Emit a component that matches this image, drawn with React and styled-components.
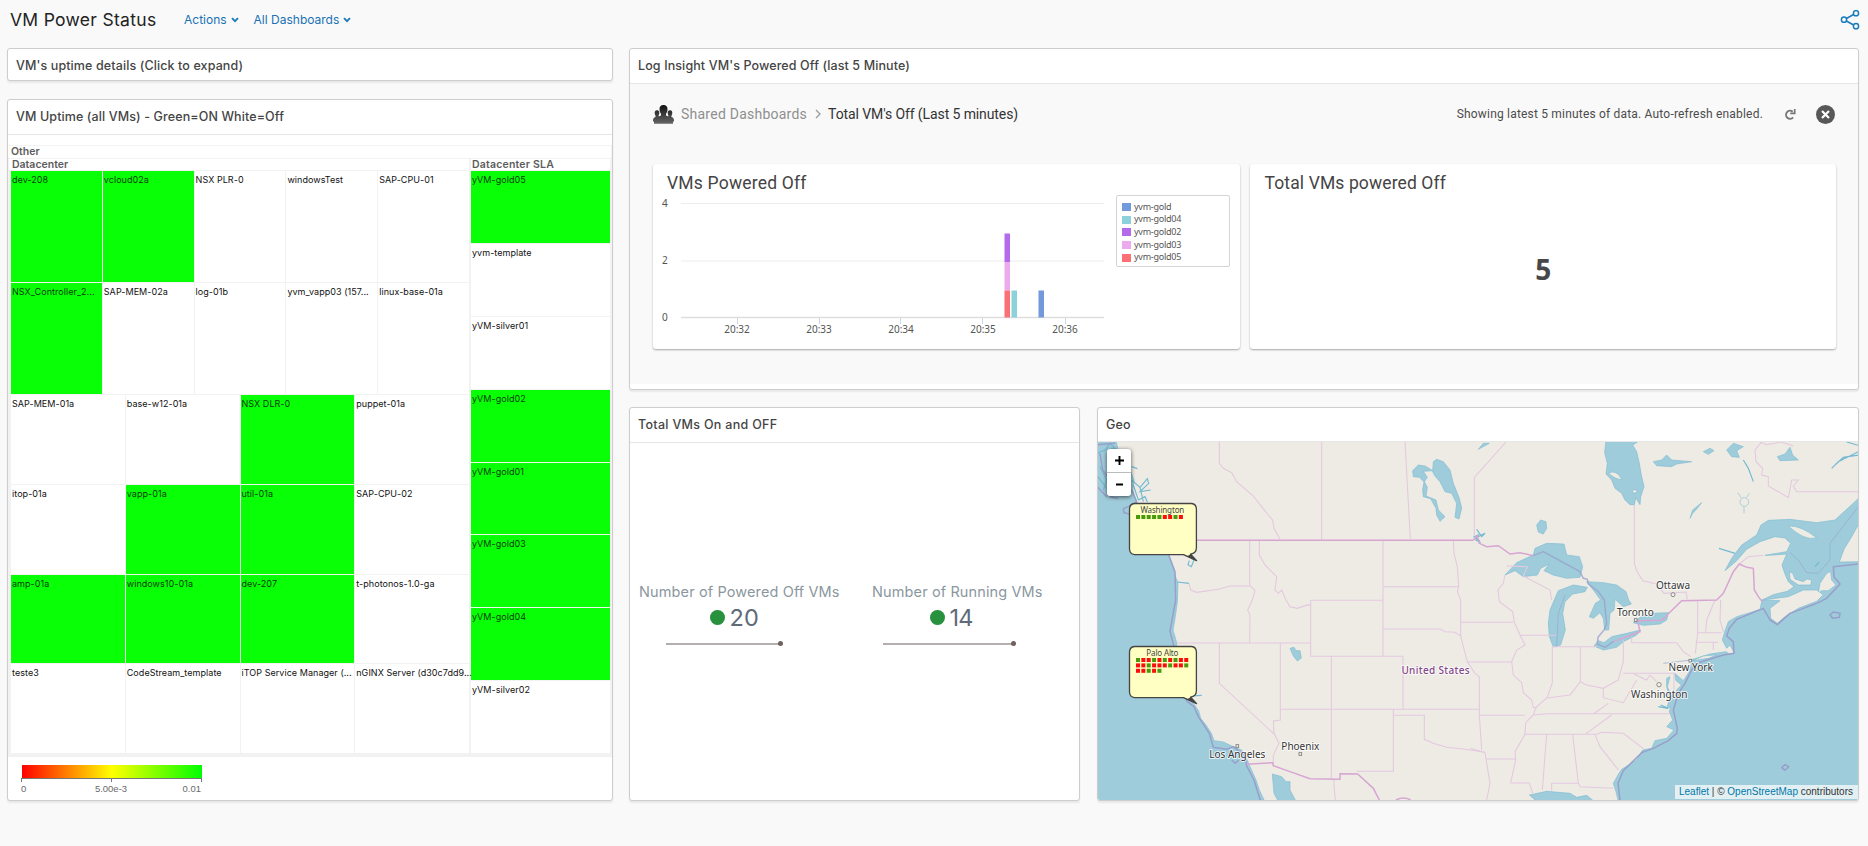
import React from "react";
import styled, { createGlobalStyle } from "styled-components";

const GlobalStyle = createGlobalStyle`
  * { box-sizing: border-box; }
  body {
    margin: 0;
    background: #f9f9f9;
    font-family: Inter, "Noto Sans", sans-serif;
    color: #313131;
    overflow: hidden;
  }
`;

/* ---------- page frame ---------- */

const Page = styled.div`
  width: 1868px;
  height: 846px;
  display: flex;
  flex-direction: column;
`;

const TopBar = styled.header`
  height: 48px;
  padding: 0 8px 9px 10px;
  display: flex;
  align-items: center;
  flex: none;
`;

const PageTitle = styled.h1`
  margin: 0;
  width: 174px;
  font-size: 17.5px;
  font-weight: 400;
  letter-spacing: 0.3px;
  color: #222;
  white-space: nowrap;
`;

const MenuLink = styled.a`
  display: flex;
  align-items: center;
  gap: 4px;
  margin-right: 15px;
  font-size: 12px;
  color: #1a72b5;
  white-space: nowrap;
`;

const ShareIcon = styled.svg`
  margin-left: auto;
  width: 20px;
  height: 20px;
  fill: none;
  stroke: #1b7bbb;
`;

const Board = styled.main`
  display: flex;
  gap: 16px;
  padding: 0 9px 0 7px;
`;

const Column = styled.div`
  display: flex;
  flex-direction: column;
  gap: ${(p) => p.$gap}px;
  width: ${(p) => p.$width}px;
  flex: none;
`;

const BottomRow = styled.div`
  display: flex;
  gap: 17px;
`;

const Panel = styled.section`
  width: ${(p) => (p.$width ? `${p.$width}px` : "100%")};
  height: ${(p) => p.$height}px;
  display: flex;
  flex-direction: column;
  background: #fff;
  border: 1px solid #cdcdcd;
  border-radius: 3px;
  box-shadow: 0 2px 2px rgba(0, 0, 0, 0.07);
  overflow: hidden;
  flex: none;
`;

const PanelTitle = styled.h2`
  margin: 0;
  height: ${(p) => p.$height || 34}px;
  padding: 0 8px ${(p) => p.$lift || 0}px;
  display: flex;
  align-items: center;
  flex: none;
  font-size: 12.5px;
  font-weight: 500;
  letter-spacing: ${(p) => p.$track || 0.11}px;
  color: #454545;
  border-bottom: ${(p) => (p.$plain ? "none" : "1px solid #e6e6e6")};
  white-space: nowrap;
`;

/* ---------- heat map ---------- */

const HeatArea = styled.div`
  margin-top: 10px;
  height: 612px;
  background: #f2f2f2;
  padding: 1px 1px 3px 0;
  display: flex;
  flex-direction: column;
  flex: none;
`;

const GroupLabel = styled.div`
  height: 12px;
  padding-left: 3px;
  background: #fff;
  font-size: 10.5px;
  line-height: 12px;
  font-weight: 600;
  letter-spacing: ${(p) => p.$track || 0}px;
  color: #5d5d5d;
  white-space: nowrap;
`;

const Groups = styled.div`
  margin-top: 1px;
  padding-left: 1px;
  display: flex;
  gap: 2px;
`;

const Group = styled.div`
  width: ${(p) => p.$width}px;
  flex: none;
`;

const GroupHeader = styled(GroupLabel)`
  height: 11px;
  line-height: 11px;
  padding-left: ${(p) => p.$pad}px;
  margin-bottom: 1px;
`;

const Tiles = styled.div`
  height: 582px;
  padding-left: ${(p) => p.$inset || 0}px;
  display: flex;
  flex-direction: column;
  gap: 1px;
`;

const TileRow = styled.div`
  flex: ${(p) => p.$share} 0 0;
  min-height: 0;
  display: flex;
  gap: 1px;
`;

const Tile = styled.div`
  flex: 1 1 0;
  min-width: 0;
  padding: 3px 0 0 1px;
  background: ${(p) => (p.$on ? "#09ff06" : "#fff")};
  color: ${(p) => (p.$on ? "#0b3d0a" : "#111")};
  font-size: 9px;
  line-height: 11px;
  letter-spacing: 0.05px;
  white-space: nowrap;
`;

const Legend = styled.div`
  width: 181px;
  margin: 8px 0 0 13px;
`;

const Ramp = styled.div`
  height: 13px;
  margin-left: 1px;
  background: linear-gradient(90deg, #f00, #ff0 50%, #0f0);
`;

const RampTicks = styled.div`
  height: 4px;
  border: 1px solid #777;
  border-bottom: none;
  display: flex;
  justify-content: center;
  &::after {
    content: "";
    width: 1px;
    background: #777;
  }
`;

const RampLabels = styled.div`
  display: grid;
  grid-template-columns: 1fr auto 1fr;
  padding: 1px 1px 0 0;
  font: 9.5px "Liberation Sans", Arial, sans-serif;
  line-height: 11px;
  color: #6a6a6a;
  span:last-child { text-align: right; }
`;

/* ---------- log insight ---------- */

const Insight = styled.div`
  height: 300px;
  background: #f9f9f9;
  padding: 0 22px 0 23px;
  font-family: Roboto, sans-serif;
  display: flex;
  flex-direction: column;
`;

const Crumbs = styled.div`
  height: 80px;
  padding-bottom: 20px;
  display: flex;
  align-items: center;
  flex: none;
  white-space: nowrap;
`;

const PeopleIcon = styled.svg`
  width: 21px;
  height: 19px;
  margin-right: 7px;
`;

const Crumb = styled.span`
  font-size: 14px;
  letter-spacing: ${(p) => p.$track}px;
  color: ${(p) => (p.$current ? "#333" : "#8f8f8f")};
`;

const CrumbArrow = styled.svg`
  width: 6px;
  height: 10px;
  margin: 0 7px 0 8px;
  fill: none;
  stroke: #9a9a9a;
  stroke-width: 1.3;
`;

const RefreshNote = styled.span`
  margin-left: auto;
  font-size: 12px;
  letter-spacing: 0.19px;
  color: #4c4c4c;
`;

const RefreshIcon = styled.svg`
  width: 12px;
  height: 13px;
  margin: 0 20px 0 21px;
  fill: none;
  stroke: #777;
  stroke-width: 1.6;
`;

const CloseIcon = styled.svg`
  width: 19px;
  height: 19px;
  margin-right: 1px;
`;

const Cards = styled.div`
  display: flex;
  gap: 10px;
`;

const Card = styled.article`
  flex: 1 1 0;
  height: 185px;
  background: #fff;
  border-radius: 3px;
  box-shadow: 0 1px 2px rgba(0, 0, 0, 0.33);
`;

const CardTitle = styled.h3`
  margin: 0;
  padding: 9px 0 0 ${(p) => p.$pad}px;
  height: 30px;
  font-size: 17.5px;
  line-height: 20px;
  font-weight: 400;
  letter-spacing: ${(p) => p.$track}px;
  color: #444;
`;

const ChartBody = styled.div`
  display: flex;
  align-items: flex-start;
`;

const Plot = styled.svg`
  width: 463px;
  height: 150px;
  flex: none;
  text { font: 10px "Noto Sans", sans-serif; fill: #555; }
`;

const SeriesList = styled.ul`
  list-style: none;
  margin: 1px 0 0;
  width: 114px;
  height: 72px;
  padding: 4px 0 0 5px;
  border: 1px solid #d4d4d4;
  border-radius: 2px;
`;

const Series = styled.li`
  display: flex;
  align-items: center;
  gap: 3px;
  height: 12.6px;
  font: 9px "Noto Sans", sans-serif;
  letter-spacing: -0.25px;
  color: #555;
  &::before {
    content: "";
    width: 9px;
    height: 8px;
    margin-top: 2px;
    background: ${(p) => p.$color};
  }
`;

const BigNumber = styled.div`
  height: 155px;
  padding: 0 0 5px 1px;
  display: flex;
  align-items: center;
  justify-content: center;
  font: 700 28px "Open Sans", sans-serif;
  color: #484848;
`;

/* ---------- counters ---------- */

const Counters = styled.div`
  display: flex;
  gap: 33px;
  padding: 140px 0 0 9px;
`;

const Counter = styled.div`
  width: ${(p) => p.$width}px;
  display: flex;
  flex-direction: column;
  align-items: flex-start;
`;

const CounterLabel = styled.div`
  height: 21px;
  font-size: 14.5px;
  line-height: 18px;
  letter-spacing: 0.12px;
  color: #8b979e;
  white-space: nowrap;
`;

const CounterValue = styled.div`
  display: flex;
  align-items: center;
  gap: 5px;
  height: 26px;
  margin-left: ${(p) => p.$indent}px;
  font-size: 23.5px;
  letter-spacing: ${(p) => p.$track || 0}px;
  color: #5f6b78;
  &::before {
    content: "";
    width: 14.6px;
    height: 15px;
    border-radius: 50%;
    background: #27913d;
  }
`;

const Spark = styled.div`
  display: flex;
  align-items: center;
  width: ${(p) => p.$width}px;
  margin: 11px 0 0 ${(p) => p.$indent}px;
  &::before {
    content: "";
    flex: 1;
    height: 2px;
    background: #b3afae;
  }
  &::after {
    content: "";
    width: 5px;
    height: 5px;
    margin-left: -1px;
    border-radius: 50%;
    background: #6f625c;
  }
`;

/* ---------- map ---------- */

const MapFrame = styled.div`
  position: relative;
  height: 359px;
  overflow: hidden;
  background: #eeebe4;
`;

const MapCanvas = styled.svg`
  display: block;
  width: 760px;
  height: 358px;
  .water path, .water ellipse { fill: #9fccda; stroke: #7fbdd3; stroke-width: 2; }
  .land path, .land ellipse { fill: #eeebe4; stroke: #7fbdd3; stroke-width: 2; }
  .inlets { fill: none; stroke: #73b9d2; stroke-width: 3.5; }
  .state { fill: none; stroke: #e4c8e0; stroke-width: 3.2; }
  .nation { fill: none; stroke: #d8a5d3; stroke-width: 4.5; }
  .sea { fill: none; stroke: #979fcb; stroke-width: 4.5; stroke-linejoin: round; }
  .sea-thin { fill: none; stroke: #93a9cf; stroke-width: 3; }
  text {
    font: 30px "Noto Sans", sans-serif;
    fill: #363636;
    text-anchor: middle;
    paint-order: stroke;
    stroke: rgba(255, 255, 255, 0.75);
    stroke-width: 6px;
    stroke-linejoin: round;
  }
  .country { fill: #85478d; font-weight: 500; letter-spacing: 1px; }
  .dot { fill: #f4f2ee; stroke: #777; stroke-width: 2.5; }
`;

const ZoomControl = styled.div`
  position: absolute;
  left: 9px;
  top: 7px;
  width: 24px;
  border-radius: 3px;
  background: #fff;
  box-shadow: 0 1px 4px rgba(0, 0, 0, 0.65);
`;

const ZoomButton = styled.div`
  height: ${(p) => p.$height}px;
  display: flex;
  align-items: center;
  justify-content: center;
  & + & { border-top: 1px solid #bbb; }
  svg { width: 9px; height: 9px; stroke: #000; stroke-width: 1.9; }
`;

const Pin = styled.svg`
  position: absolute;
  left: 30px;
  top: ${(p) => p.$top}px;
  width: 70px;
  height: 60px;
  text { font: 8px "Noto Sans", sans-serif; letter-spacing: -0.15px; fill: #444; text-anchor: middle; }
`;

const Attribution = styled.div`
  position: absolute;
  right: 0;
  bottom: 1px;
  width: 183px;
  height: 14px;
  padding-left: 4px;
  background: rgba(255, 255, 255, 0.7);
  font: 10px "Liberation Sans", Arial, sans-serif;
  line-height: 14px;
  color: #333;
  white-space: nowrap;
  a { color: #0078a8; }
`;

/* ---------- data ---------- */

const datacenterRows = [
  { share: 111, tiles: [["dev-208", 1], ["vcloud02a", 1], ["NSX PLR-0"], ["windowsTest"], ["SAP-CPU-01"]] },
  { share: 111, tiles: [["NSX_Controller_2...", 1], ["SAP-MEM-02a"], ["log-01b"], ["yvm_vapp03 (157..."], ["linux-base-01a"]] },
  { share: 88.75, tiles: [["SAP-MEM-01a"], ["base-w12-01a"], ["NSX DLR-0", 1], ["puppet-01a"]] },
  { share: 88.75, tiles: [["itop-01a"], ["vapp-01a", 1], ["util-01a", 1], ["SAP-CPU-02"]] },
  { share: 88.75, tiles: [["amp-01a", 1], ["windows10-01a", 1], ["dev-207", 1], ["t-photonos-1.0-ga"]] },
  { share: 88.75, tiles: [["teste3"], ["CodeStream_template"], ["iTOP Service Manager (..."], ["nGINX Server (d30c7dd9..."]] },
];

const slaRows = [
  ["yVM-gold05", 1], ["yvm-template"], ["yVM-silver01"], ["yVM-gold02", 1],
  ["yVM-gold01", 1], ["yVM-gold03", 1], ["yVM-gold04", 1], ["yVM-silver02"],
].map((tile) => ({ share: 1, tiles: [tile] }));

const series = [
  ["yvm-gold", "#7199dc"],
  ["yvm-gold04", "#8dd2db"],
  ["yvm-gold02", "#b36bec"],
  ["yvm-gold03", "#ecabec"],
  ["yvm-gold05", "#fb7074"],
];

const TileGrid = ({ rows, inset }) => (
  <Tiles $inset={inset}>
    {rows.map((row, i) => (
      <TileRow key={i} $share={row.share}>
        {row.tiles.map(([name, on]) => (
          <Tile key={name} $on={on}>{name}</Tile>
        ))}
      </TileRow>
    ))}
  </Tiles>
);

const Chevron = () => (
  <svg width="8" height="6" viewBox="0 0 8 6" fill="none" stroke="#1b7bbb" strokeWidth="1.9">
    <path d="M1 1.2 4 4.2 7 1.2" />
  </svg>
);

const SiteCallout = ({ top, name, health }) => (
  <Pin $top={top} viewBox="0 0 70 60">
    <path
      d="M6.5 1.5H63.5Q68.3 2 68.4 7V46Q68.3 51 62.6 52.2L68.6 58.6 55.5 52.6H6.5Q1.6 52 1.5 47V7Q1.6 2 6.5 1.5Z"
      fill="#ffffc4" stroke="#444" strokeWidth="1.3" strokeLinejoin="round"
    />
    <path d="M62.6 52.2 68.6 58.6 59 54.2" fill="#444" />
    <text x="34.3" y="10.6">{name}</text>
    {health.map((line, r) =>
      [...line].map((c, i) => (
        <rect
          key={`${r}-${i}`}
          x={8 + i * 5.36} y={13 + r * 5.4} width="4" height="4"
          fill={c === "g" ? "#4a9a0c" : "#f90d0d"}
        />
      ))
    )}
  </Pin>
);

const GeoMap = () => (
  <MapCanvas viewBox="24 126 2280 1074" preserveAspectRatio="none">
    <rect x="24" y="126" width="2280" height="1074" fill="#eeebe4" />
    <g className="water">
      <path d="M20 120H78L84 150 104 165 120 210 132 240 128 270 140 306 190 380 232 464 246 492 252 520 264 548 263 580 262 606 256 650 249 690 260 728 262 770 285 860 300 890 310 910 326 932 332 955 348 975 364 1000 372 1022 400 1026 430 1040 455 1050 470 1076 480 1100 498 1140 508 1170 524 1204H20Z" />
      <path d="M1030 185 1040 178 1060 185 1080 210 1090 250 1108 295 1115 325 1107 357 1095 352 1100 310 1085 280 1065 275 1050 245 1035 228 1028 215Z" />
      <path d="M968 212 985 195 1005 198 1028 212 1000 214 1012 232 1003 245 1012 262 1008 288 1038 300 1045 330 1065 350 1050 364 1040 345 1038 325 1022 296 1000 290 998 270 1002 245 988 232 970 230Z" />
      <path d="M600 745 612 742 618 752 630 752 634 774 622 783 610 768Z" />
      <path d="M547 1122 575 1130 588 1145 600 1145 600 1170 618 1204H565L552 1180Z" />
    </g>
    <g className="inlets">
      <path d="M20 160 45 150 60 130 75 145 55 150M30 200 50 240 40 270M24 230 48 262 70 280M125 200 142 206M125 240 150 262 172 236 176 250 150 275 182 270M130 255 145 300 165 290 172 306M150 262 160 305M300 470 312 480 304 500 294 494 298 482M262 546 297 550M300 888 335 886M1150 412 1165 405 1158 420 1172 428" />
    </g>
    <g className="sea">
      <path d="M24 134 75 130M30 160 38 210 60 240 70 270M60 290 85 296M125 270 140 306 115 320 100 326 102 338 118 342M20 258 50 290M236 464 255 515 257 600 240 694 252 740M285 892 292 905 312 920 325 950 358 1000 370 1042 410 1048 430 1040 465 1068 470 1098 492 1140 512 1204M425 1080 436 1090 446 1080" />
    </g>
    <g className="state">
      <path d="M388 126V190L400 205 425 218 440 245 460 262 490 288 515 320 535 345 548 360 552 385 570 418M695 126V420M945 126 961 418M1153 408V232L1248 126" />
      <path d="M479 421V555L495 572 487 600 473 630 480 645 479 728M508 421V465L525 495 560 530 555 570 565 580 575 570 588 600 600 620 622 625 655 614 662 618M879 421V768M879 560H1108M1090 421 1092 460 1102 500 1106 560 1102 575 1112 600V708M297 550 302 570 320 577 385 568 420 558 479 558" />
      <path d="M262 729H662M662 601H879M662 601V769H939V927M879 687H1050L1065 695 1095 697 1112 708 1120 740 1132 785 1145 805 1155 820 1168 830V945L1175 1050M1112 667H1270M1132 786H1265M571 728V960L550 963 552 1000 567 1030 550 1065V1097M388 728V850L552 1002M724 769V1137M571 928H1168M910 928V1114H800M910 946H1003V1018L1030 1030 1070 1042 1120 1047 1185 1057M732 1140V1160L736 1200" />
    </g>
    <g className="nation">
      <path d="M300 421H1150M470 1093 548 1088 550 1097 600 1115 660 1136 750 1138V1121L803 1122 850 1165 868 1200M918 1200Q940 1188 962 1200" />
    </g>

    <g transform="translate(1140 0)">
      <g className="water">
        <path d="M408 120 404 158 412 190 408 222 425 240 435 265 455 280 465 300 480 314 493 314 497 293 510 314 512 290 522 260 514 225 508 190 500 155 488 135 512 120Z" />
        <path d="M765 512 785 475 815 435 860 405 873 375 895 361 960 358 1040 368 1095 360 1130 328 1155 305 1170 290V1204H445L438 1175 430 1150 444 1125 455 1108 500 1080 518 1050 545 1045 555 1022 590 1015 612 990 590 980 608 960 598 935 602 920 590 925 600 895 590 860 590 835 600 830 592 860 606 890 620 870 634 855 618 842 614 820 640 842 658 815 664 790 662 780 720 762 768 755 782 765 792 758 780 735 770 745 757 720 765 692 775 665 800 650 840 638 870 628 876 600 910 584 952 574 972 560 955 545 944 520 936 495 950 462 910 465 885 466 950 455 962 430 945 414 915 410 870 425 830 448 800 482Z" />
        <path d="M105 525 140 488 190 465 195 445 230 430 282 432 290 465 328 470 338 500 330 532 290 535 250 525 222 512 238 492 212 505 202 525 160 530 135 512Z" />
        <path d="M235 670 240 630 255 595 265 572 310 555 352 562 345 575 308 582 285 605 278 640 286 690 272 735 250 741 238 710Z" />
        <path d="M350 545 400 548 440 555 468 575 476 600 484 612 460 620 435 598 432 630 420 640 416 690 404 690 400 655 390 638 370 655 358 650 376 610 392 600 370 570Z" />
        <path d="M372 738 385 722 402 728 425 710 470 700 512 690 500 705 460 725 440 742 400 750Z" />
        <path d="M490 668 510 652 545 640 595 638 590 660 570 672 520 676Z" />
        <path d="M200 375 212 360 228 365 230 385 220 402 205 396Z" />
        <path d="M550 185 575 180 590 165 605 180 665 185 620 192 605 200 560 197ZM700 155 720 145 732 152 715 163ZM922 170 945 162 960 142 968 165 985 180 930 182ZM770 150 790 130 820 140 800 152 808 172 785 170Z" />
        <path d="M660 355 668 330 695 308 682 325 668 340ZM25 148 40 130 58 130Z" />
        <path d="M178 1185 230 1174 300 1180 320 1192 350 1186 372 1204H200Z" />
      </g>
      <g className="land">
        <path d="M415 220Q440 206 456 240 436 238 415 220Z" />
        <ellipse cx="494" cy="274" rx="7" ry="5" />
        <path d="M955 378Q990 375 1040 413 1005 425 955 378Z" />
        <path d="M1108 486 1122 448 1145 410 1170 365V485Z" />
        <path d="M958 515 968 520 975 537 1000 545 1010 537 1025 540 1022 555 985 555 960 538Z" />
        <path d="M1045 580 1050 550 1070 520 1082 514 1085 540 1098 555 1075 572 1055 572Z" />
        <path d="M878 600 955 590 1000 570 1040 570 1060 584 1040 604 985 625 945 650 922 670 902 655 900 625 930 602Z" />
        <path d="M668 782 700 768 742 764 715 775Z" />
      </g>
      <g className="inlets">
        <path d="M747 445 795 460M820 180 835 205 850 245M1085 205 1105 185 1165 155M1095 195 1120 172 1165 165M20 388 35 410 45 400 15 415 30 422M572 915 595 925 565 920M1035 500 1048 486M1130 126 1165 136" />
        <g strokeWidth="2" opacity="0.8">
          <path d="M803 278 814 294M822 340V321M838 280 830 292" />
          <circle cx="823" cy="306" r="13" />
        </g>
      </g>
      <g className="state">
        <path d="M493 315V490L500 512 518 542 560 552 582 580 648 576 652 598M808 492 835 470 880 466M875 126 855 150 858 185 878 205 875 225 895 230 895 258 925 275 955 293 965 240 985 240 970 258 980 275H1165M870 126 890 134 935 126 970 138" />
        <path d="M105 525 100 550 84 570 88 605 128 635 133 667 150 705 165 735 140 750 125 785 130 825 155 848 160 878 185 900 190 922 200 925M150 706H260M160 528 172 500 110 498M160 528 240 570 245 600M247 740V848L232 892 198 922 190 945 167 968 165 1003 135 1055 137 1080 122 1149H178L188 1180M28 946H165M0 1045 45 1058 48 1077H135M48 1077 60 1150 50 1200" />
        <path d="M247 740H380M331 740V845L350 855 400 865 445 840 460 785V720M331 845 300 885 232 894M485 712V728H620L640 755 662 770M460 820H612V900M492 822 530 840 540 825 560 845M400 865 400 893 460 908 500 840M415 910 370 942M190 945 232 941H600M345 1003 425 945M163 1003H380L395 997 460 1000 520 1046M375 1003 390 1040 445 1110M230 1003 217 1170M308 1003 325 1150H245V1172M325 1150 330 1160 430 1165" />
        <path d="M683 602V700L676 760M683 698H755M676 727H745M735 600 710 660 707 698M752 600 750 660 760 695M730 728V750" />
      </g>
      <g className="nation">
        <path d="M10 421 22 408 28 430 50 440 85 437 120 462 150 458 190 467M430 725 510 695 503 662 575 661 635 602 740 600 760 580 790 515 808 492 830 502 850 505 853 570 865 590 877 605" />
      </g>
      <g className="sea">
        <path d="M190 467 220 455 330 515 340 535 352 538 355 552 385 575 403 600 410 672 402 690 384 712 382 732 405 742 430 725" opacity="0.75" />
        <path d="M1165 492 1090 500 1092 530 1110 552 1070 595 1040 610 960 640 922 674 900 660 880 625 800 658 778 685 770 708 790 725 792 760 760 765 680 790 665 810 645 850 625 880 610 930 622 985 620 1000 595 1022 550 1045 515 1058 460 1112 444 1150 450 1200M1080 645 1090 636 1110 640 1108 652 1088 655ZM935 1103 945 1094 956 1100 945 1111Z" />
      </g>
      <g className="sea-thin">
        <path d="M1165 320 1080 430V480L1045 520 1010 518 985 480 960 458M260 740 265 640 285 585M665 780 580 790" opacity="0.7" />
      </g>
    </g>

    <rect className="dot" x="438" y="1034" width="8" height="8" />
    <rect className="dot" x="627" y="1058" width="8" height="8" />
    <circle className="dot" cx="1749" cy="584" r="6" />
    <rect className="dot" x="1633" y="656" width="8" height="8" />
    <rect className="dot" x="1797" y="778" width="8" height="8" />
    <circle className="dot" cx="1707" cy="854" r="6.5" />
    <text x="442" y="1073">Los Angeles</text>
    <text x="631" y="1050">Phoenix</text>
    <text x="1037" y="821" className="country">United States</text>
    <text x="1749" y="567">Ottawa</text>
    <text x="1636" y="649">Toronto</text>
    <text x="1802" y="813">New York</text>
    <text x="1708" y="893">Washington</text>
  </MapCanvas>
);

export default function App() {
  return (
    <Page>
      <GlobalStyle />
      <TopBar>
        <PageTitle>VM Power Status</PageTitle>
        <MenuLink>Actions <Chevron /></MenuLink>
        <MenuLink>All Dashboards <Chevron /></MenuLink>
        <ShareIcon viewBox="0 0 20 20" strokeWidth="1.5">
          <circle cx="4" cy="9.7" r="2.6" />
          <circle cx="16" cy="3.2" r="2.6" />
          <circle cx="16" cy="16.2" r="2.6" />
          <path d="M6.4 8.5 13.6 4.5M6.4 11 13.6 15" />
        </ShareIcon>
      </TopBar>

      <Board>
        <Column $width={606} $gap={18}>
          <Panel $height={33}>
            <PanelTitle $height={32} $plain>VM's uptime details (Click to expand)</PanelTitle>
          </Panel>
          <Panel $height={702}>
            <PanelTitle $height={35} $lift={1}>VM Uptime (all VMs) - Green=ON White=Off</PanelTitle>
            <HeatArea>
              <GroupLabel>Other</GroupLabel>
              <Groups>
                <Group $width={460}>
                  <GroupHeader $pad={3}>Datacenter</GroupHeader>
                  <TileGrid rows={datacenterRows} inset={2} />
                </Group>
                <Group $width={139}>
                  <GroupHeader $pad={1} $track={0.2}>Datacenter SLA</GroupHeader>
                  <TileGrid rows={slaRows} />
                </Group>
              </Groups>
            </HeatArea>
            <Legend>
              <Ramp />
              <RampTicks />
              <RampLabels><span>0</span><span>5.00e-3</span><span>0.01</span></RampLabels>
            </Legend>
          </Panel>
        </Column>

        <Column $width={1230} $gap={17}>
          <Panel $height={342}>
            <PanelTitle $height={35} $lift={1}>Log Insight VM's Powered Off (last 5 Minute)</PanelTitle>
            <Insight>
              <Crumbs>
                <PeopleIcon viewBox="0 0 21 19">
                  <defs>
                    <linearGradient id="crowd" x1="0" y1="0" x2="0" y2="1">
                      <stop offset="0" stopColor="#111" />
                      <stop offset="1" stopColor="#666" />
                    </linearGradient>
                  </defs>
                  <path
                    fill="url(#crowd)"
                    d="M10.5 0C13.3 0 14.6 1.8 14.5 4.4 14.4 6.4 13.8 7.8 13 8.8V10.4L15.3 11.4C15.6 10.8 15.2 10.2 14.9 9.3 14.2 7.1 15 5.3 17 5.3S19.8 7.1 19.1 9.3C18.7 10.6 18.2 11 18.5 11.9 20.3 12.6 21 13.6 21 15.3V16.4H20V18.7H1V16.4H0V15.3C0 13.6 .7 12.6 2.5 11.9 2.8 11 2.3 10.6 1.9 9.3 1.2 7.1 2 5.3 4 5.3S6.8 7.1 6.1 9.3C5.8 10.2 5.4 10.8 5.7 11.4L8 10.4V8.8C7.2 7.8 6.6 6.4 6.5 4.4 6.4 1.8 7.7 0 10.5 0Z"
                  />
                </PeopleIcon>
                <Crumb $track={0.24}>Shared Dashboards</Crumb>
                <CrumbArrow viewBox="0 0 6 10"><path d="M1 1 5 5 1 9" /></CrumbArrow>
                <Crumb $current $track={-0.1}>Total VM's Off (Last 5 minutes)</Crumb>
                <RefreshNote>Showing latest 5 minutes of data. Auto-refresh enabled.</RefreshNote>
                <RefreshIcon viewBox="0 0 10 11">
                  <path d="M7.3 3.2A3.4 3.4 0 1 0 7.6 8" />
                  <path d="M9 .9V4.6H5.2" strokeWidth="1.4" />
                </RefreshIcon>
                <CloseIcon viewBox="0 0 19 19">
                  <circle cx="9.5" cy="9.5" r="9.5" fill="#585858" />
                  <path d="M6 6 13 13M13 6 6 13" stroke="#fff" strokeWidth="2.2" />
                </CloseIcon>
              </Crumbs>
              <Cards>
                <Card>
                  <CardTitle $pad={14} $track={0.2}>VMs Powered Off</CardTitle>
                  <ChartBody>
                    <Plot viewBox="0 0 463 150">
                      <path d="M28 9.5H451M28 67H451" stroke="#ececec" strokeWidth="1" />
                      <path d="M28 123.5H451" stroke="#dedede" strokeWidth="1.5" />
                      <path d="M84.5 124V130M166.5 124V130M247.5 124V130M329.5 124V130M412.5 124V130" stroke="#ccd6eb" />
                      <text x="9" y="12.5">4</text>
                      <text x="9" y="69.5">2</text>
                      <text x="9" y="126.5">0</text>
                      <text x="84" y="138.5" textAnchor="middle">20:32</text>
                      <text x="166" y="138.5" textAnchor="middle">20:33</text>
                      <text x="248" y="138.5" textAnchor="middle">20:34</text>
                      <text x="330" y="138.5" textAnchor="middle">20:35</text>
                      <text x="412" y="138.5" textAnchor="middle">20:36</text>
                      <rect x="351.5" y="39.5" width="5.5" height="28.5" fill="#b36bec" />
                      <rect x="351.5" y="68" width="5.5" height="28.5" fill="#ecabec" />
                      <rect x="351.5" y="96.5" width="5.5" height="27" fill="#fb7074" />
                      <rect x="358.5" y="96.5" width="5.5" height="27" fill="#8dd2db" />
                      <rect x="385.5" y="96.5" width="5.5" height="27" fill="#7199dc" />
                    </Plot>
                    <SeriesList>
                      {series.map(([name, color]) => (
                        <Series key={name} $color={color}>{name}</Series>
                      ))}
                    </SeriesList>
                  </ChartBody>
                </Card>
                <Card>
                  <CardTitle $pad={15} $track={0.12}>Total VMs powered Off</CardTitle>
                  <BigNumber>5</BigNumber>
                </Card>
              </Cards>
            </Insight>
          </Panel>

          <BottomRow>
            <Panel $width={451} $height={394}>
              <PanelTitle $height={35} $track={0.3} $lift={1}>Total VMs On and OFF</PanelTitle>
              <Counters>
                <Counter $width={200}>
                  <CounterLabel>Number of Powered Off VMs</CounterLabel>
                  <CounterValue $indent={71}>20</CounterValue>
                  <Spark $indent={27} $width={117} />
                </Counter>
                <Counter $width={170}>
                  <CounterLabel>Number of Running VMs</CounterLabel>
                  <CounterValue $indent={58} $track={-0.8}>14</CounterValue>
                  <Spark $indent={11} $width={133} />
                </Counter>
              </Counters>
            </Panel>

            <Panel $width={762} $height={394}>
              <PanelTitle $height={34} $lift={1}>Geo</PanelTitle>
              <MapFrame>
                <GeoMap />
                <ZoomControl>
                  <ZoomButton $height={23}>
                    <svg viewBox="0 0 9 9"><path d="M0 4.5H9M4.5 0V9" /></svg>
                  </ZoomButton>
                  <ZoomButton $height={24}>
                    <svg viewBox="0 0 9 9"><path d="M1 4.5H8" /></svg>
                  </ZoomButton>
                </ZoomControl>
                <SiteCallout top={59.5} name="Washington" health={["gggggrrgr"]} />
                <SiteCallout top={202.5} name="Palo Alto" health={["grrgrgrgrr", "rrgrrrgrrg", "rrgrg"]} />
                <Attribution><a>Leaflet</a> | © <a>OpenStreetMap</a> contributors</Attribution>
              </MapFrame>
            </Panel>
          </BottomRow>
        </Column>
      </Board>
    </Page>
  );
}
